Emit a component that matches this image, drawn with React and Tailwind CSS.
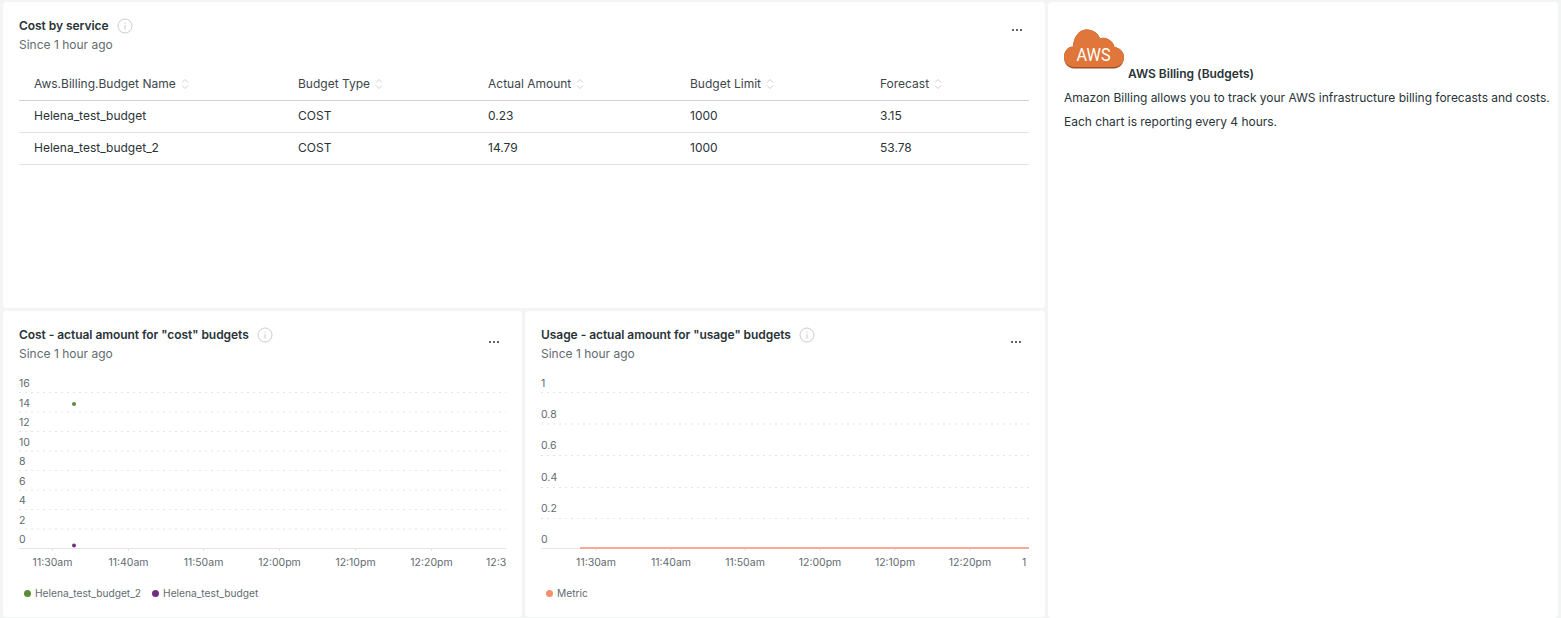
import React from 'react'

const rows = [
  { name: 'Helena_test_budget', type: 'COST', actual: '0.23', limit: '1000', forecast: '3.15' },
  { name: 'Helena_test_budget_2', type: 'COST', actual: '14.79', limit: '1000', forecast: '53.78' },
]

const columns = ['Aws.Billing.Budget Name', 'Budget Type', 'Actual Amount', 'Budget Limit', 'Forecast']

function InfoIcon() {
  return (
    <svg width="16" height="16" viewBox="0 0 16 16" fill="none" className="shrink-0">
      <circle cx="8" cy="8" r="7" stroke="#c9cdcf" strokeWidth="1" />
      <path d="M8 7v4.5M8 4.6v1" stroke="#b5babd" strokeWidth="0.8" />
    </svg>
  )
}

function SortIcon() {
  return (
    <svg width="8" height="12" viewBox="0 0 8 12" fill="none" className="shrink-0">
      <path d="M1 4.500 4 1.500l3 3M1 7.500l3 3 3-3" stroke="#ced2d4" strokeWidth="1" />
    </svg>
  )
}

function MoreIcon() {
  return (
    <svg width="12" height="4" viewBox="0 0 12 4" fill="#293338" className="shrink-0">
      <circle cx="2" cy="2" r="1" />
      <circle cx="6" cy="2" r="1" />
      <circle cx="10" cy="2" r="1" />
    </svg>
  )
}

function CardHeader({ title, moreClass }) {
  return (
    <div className="flex items-start justify-between">
      <div>
        <div className="flex items-center gap-2 h-[18px]">
          <h2 className="text-[12px] font-semibold tracking-[-0.05px] text-[#293338]">{title}</h2>
          <InfoIcon />
        </div>
        <p className="text-[12px] leading-[18px] mt-[1px] text-[#626b70]">Since 1 hour ago</p>
      </div>
      <div className={moreClass}>
        <MoreIcon />
      </div>
    </div>
  )
}

function Chart({ width, grid, yLabels, xLabels, children }) {
  return (
    <svg width={width} height="198" className="block mt-[10px] font-['Inter',sans-serif]">
      {grid.map((y) => (
        <line key={y} x1="0" x2={width} y1={y} y2={y} stroke="#e3e5e6" strokeWidth="1" strokeDasharray="2 4" />
      ))}
      <line x1="0" x2={width} y1="175.500" y2="175.500" stroke="#e3e5e6" strokeWidth="1" />
      {yLabels.map(([label, y]) => (
        <text key={label} x="0" y={y} fontSize="10.500" fill="#626b70">{label}</text>
      ))}
      {xLabels.map(([label, x, anchor]) => (
        <g key={label}>
          {anchor === 'middle' && <line x1={x} x2={x} y1="175" y2="178" stroke="#e3e5e6" />}
          <text x={x} y="193" fontSize="10.500" fill="#626b70" textAnchor={anchor}>{label}</text>
        </g>
      ))}
      {children}
    </svg>
  )
}

function Legend({ items }) {
  return (
    <div className="flex items-center gap-[11px] mt-[15px] pl-[5px] text-[10.2px] leading-[14px] text-[#626b70]">
      {items.map(([label, color]) => (
        <div key={label} className="flex items-center gap-[4px]">
          <span className={`w-[7px] h-[7px] rounded-full ${color}`} />
          <span>{label}</span>
        </div>
      ))}
    </div>
  )
}

function AwsLogo() {
  return (
    <svg width="60" height="40" viewBox="0 0 60 40" className="shrink-0">
      <path d="M10 39.500C4 39.500 0 34.500 0 28C0 22.500 4 17.500 9 17.500C9.500 8 15 .5 23 .5C29 .5 34 4 36 9.500C38 8.500 41 8.500 44 10C48 12 50 15 50.500 18C56 19 60 23 60 28C60 34.500 56 39.500 50 39.500Z" fill="#9c4f2a" />
      <path d="M10 38C4 38 0 33.500 0 28C0 22.500 4 17.500 9 17.500C9.500 8 15 .5 23 .5C29 .5 34 4 36 9.500C38 8.500 41 8.500 44 10C48 12 50 15 50.500 18C56 19 60 23 60 28C60 33.500 56 38 50 38Z" fill="#e07639" />
      <text x="29.500" y="32" textAnchor="middle" fontFamily="Roboto, sans-serif" fontWeight="400" fontSize="19" fill="#ffffff" textLength="34" lengthAdjust="spacingAndGlyphs">AWS</text>
    </svg>
  )
}

export default function App() {
  return (
    <div className="h-[618px] overflow-hidden bg-[#f3f4f4] pt-[2px] pl-[3px] pr-[3px] flex gap-[3px] font-['Inter',sans-serif] text-[#293338]">
      {/* Left column */}
      <div className="w-[1042px] shrink-0 flex flex-col gap-[3px]">
        {/* Table card */}
        <section className="h-[306px] bg-white rounded-[4px] pt-[15px] px-[16px]">
          <CardHeader title="Cost by service" moreClass="pt-[11px] pr-[6px]" />
          <div className="w-[1010px] mt-[16px] text-[12px]">
            <div className="grid grid-cols-[264px_190px_202px_190px_1fr] h-[31px] pb-[2px] items-center border-b border-[#ced2d5] pl-[15px] text-[#3d464b]">
              {columns.map((c) => (
                <div key={c} className="flex items-center gap-[5px]">
                  <span>{c}</span>
                  <SortIcon />
                </div>
              ))}
            </div>
            {rows.map((r) => (
              <div key={r.name} className="grid grid-cols-[264px_190px_202px_190px_1fr] h-[32px] pb-[2px] items-center border-b border-[#dfe2e3] pl-[15px] text-[#293338]">
                <div>{r.name}</div>
                <div>{r.type}</div>
                <div>{r.actual}</div>
                <div>{r.limit}</div>
                <div>{r.forecast}</div>
              </div>
            ))}
          </div>
        </section>

        {/* Charts */}
        <div className="flex gap-[3px]">
          <section className="w-[519px] h-[306px] bg-white rounded-[4px] pt-[15px] pl-[16px] pr-[16px]">
            <CardHeader title={'Cost - actual amount for "cost" budgets'} moreClass="pt-[14px] pr-[6px]" />
            <Chart
              width={487}
              grid={[19.5, 39, 58.5, 78, 97.5, 117, 136.5, 156]}
              yLabels={[['16', 14], ['14', 34], ['12', 53], ['10', 73], ['8', 92], ['6', 112], ['4', 131], ['2', 151], ['0', 170]]}
              xLabels={[['11:30am', 33.5, 'middle'], ['11:40am', 109.5, 'middle'], ['11:50am', 184.5, 'middle'], ['12:00pm', 260.5, 'middle'], ['12:10pm', 336.5, 'middle'], ['12:20pm', 412.5, 'middle'], ['12:3', 467, 'start']]}
            >
              <circle cx="55" cy="31" r="2" fill="#5b8c35" />
              <circle cx="55" cy="172.500" r="2" fill="#6e3180" />
            </Chart>
            <Legend items={[['Helena_test_budget_2', 'bg-[#5b8c35]'], ['Helena_test_budget', 'bg-[#6e3180]']]} />
          </section>

          <section className="w-[520px] h-[306px] bg-white rounded-[4px] pt-[15px] pl-[16px] pr-[16px]">
            <CardHeader title={'Usage - actual amount for "usage" budgets'} moreClass="pt-[14px] pr-[7px]" />
            <Chart
              width={488}
              grid={[19.5, 51, 82.5, 114.5, 145.5]}
              yLabels={[['1', 14], ['0.8', 45], ['0.6', 76], ['0.4', 108], ['0.2', 139], ['0', 170]]}
              xLabels={[['11:30am', 55, 'middle'], ['11:40am', 130, 'middle'], ['11:50am', 204, 'middle'], ['12:00pm', 279, 'middle'], ['12:10pm', 354, 'middle'], ['12:20pm', 429, 'middle'], ['1', 481, 'start']]}
            >
              <line x1="39" x2="488" y1="175" y2="175" stroke="#f6a996" strokeWidth="2" />
            </Chart>
            <Legend items={[['Metric', 'bg-[#f98d6c]']]} />
          </section>
        </div>
      </div>

      {/* Description card */}
      <section className="flex-1 bg-white rounded-[4px] pt-[27px] pl-[16px] text-[12px] tracking-[-0.02px] text-[#293338]">
        <div className="flex items-end gap-[4px]">
          <AwsLogo />
          <h3 className="font-semibold leading-[14px] mb-[-12px]">AWS Billing (Budgets)</h3>
        </div>
        <p className="mt-[20px] leading-[18px]">Amazon Billing allows you to track your AWS infrastructure billing forecasts and costs.</p>
        <p className="mt-[6px] leading-[18px]">Each chart is reporting every 4 hours.</p>
      </section>
    </div>
  )
}
